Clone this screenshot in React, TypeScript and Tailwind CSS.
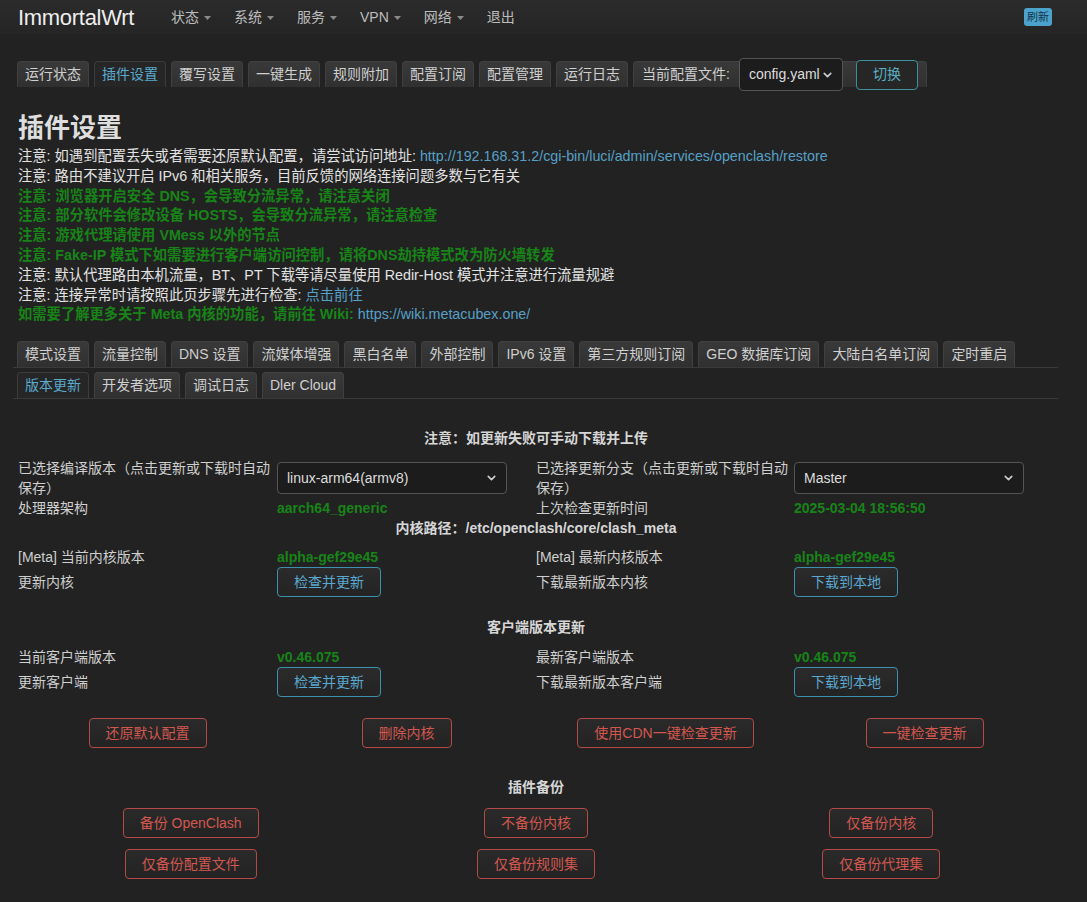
import { ChevronDown } from "lucide-react";

const FONT = "font-['Liberation_Sans','Noto_Sans_CJK_SC',sans-serif]";

const navItems = [
  { label: "状态", caret: true },
  { label: "系统", caret: true },
  { label: "服务", caret: true },
  { label: "VPN", caret: true },
  { label: "网络", caret: true },
  { label: "退出", caret: false },
];

const topTabs = ["运行状态", "插件设置", "覆写设置", "一键生成", "规则附加", "配置订阅", "配置管理", "运行日志"];

const subTabsRow1 = [
  "模式设置",
  "流量控制",
  "DNS 设置",
  "流媒体增强",
  "黑白名单",
  "外部控制",
  "IPv6 设置",
  "第三方规则订阅",
  "GEO 数据库订阅",
  "大陆白名单订阅",
  "定时重启",
];

const subTabsRow2 = ["版本更新", "开发者选项", "调试日志", "Dler Cloud"];

const Caret = () => (
  <svg width="7" height="4" viewBox="0 0 7 4" className="ml-[5px] mt-[1px]">
    <path d="M0 0 L7 0 L3.5 4 Z" fill="#8a8a8a" />
  </svg>
);

const Tab = ({ label, active }: { label: string; active?: boolean }) => (
  <div
    className={
      active
        ? "h-[26px] px-[7px] flex items-center rounded-t-[4px] border border-b-0 border-[#3c3c3c] bg-[#262626] text-[14px] text-[#5aa9cf]"
        : "h-[26px] px-[7px] flex items-center rounded-t-[4px] border border-b-0 border-[#404040] bg-linear-to-b from-[#393939] to-[#303030] text-[14px] text-[#cfcfcf]"
    }
  >
    {label}
  </div>
);

const FakeSelect = ({ value, className }: { value: string; className: string }) => (
  <div className={`relative flex items-center rounded-[4px] border border-[#555] bg-[#1c1c1c] text-[14px] text-[#ddd] ${className}`}>
    <span>{value}</span>
    <ChevronDown className="absolute right-[8px] top-1/2 -translate-y-1/2 w-[13px] h-[13px] text-[#ccc]" strokeWidth={3} />
  </div>
);

const BlueButton = ({ label }: { label: string }) => (
  <button className="h-[30px] px-[16px] rounded-[4px] border border-[#3f8fae] bg-linear-to-b from-[#2b2b2b] to-[#232323] text-[14px] text-[#5aa8d0]">
    {label}
  </button>
);

const RedButton = ({ label }: { label: string }) => (
  <button className="h-[30px] px-[16px] rounded-[4px] border border-[#b34a46] bg-linear-to-b from-[#2a2a2a] to-[#232323] text-[14px] text-[#d3574f]">
    {label}
  </button>
);

const Heading = ({ children, className = "" }: { children: React.ReactNode; className?: string }) => (
  <div className={`text-center font-bold text-[14px] leading-[20px] text-[#d6d6d6] ${className}`}>{children}</div>
);

const Label = ({ children }: { children: React.ReactNode }) => (
  <div className="text-[14px] leading-[20px] text-[#cfcfcf]">{children}</div>
);

const Green = ({ children }: { children: React.ReactNode }) => (
  <div className="text-[14px] leading-[20px] font-bold text-[#188418]">{children}</div>
);

const Notes = () => (
  <div className="mt-[1px] text-[14.3px] leading-[19.8px] text-[#e2e2e2]">
    <p>
      注意: 如遇到配置丢失或者需要还原默认配置，请尝试访问地址:{" "}
      <span className="text-[#56a0c8]">http://192.168.31.2/cgi-bin/luci/admin/services/openclash/restore</span>
    </p>
    <p>注意: 路由不建议开启 IPv6 和相关服务，目前反馈的网络连接问题多数与它有关</p>
    <p className="font-bold text-[#188418]">注意: 浏览器开启安全 DNS，会导致分流异常，请注意关闭</p>
    <p className="font-bold text-[#188418]">注意: 部分软件会修改设备 HOSTS，会导致分流异常，请注意检查</p>
    <p className="font-bold text-[#188418]">注意: 游戏代理请使用 VMess 以外的节点</p>
    <p className="font-bold text-[#188418]">注意: Fake-IP 模式下如需要进行客户端访问控制，请将DNS劫持模式改为防火墙转发</p>
    <p>注意: 默认代理路由本机流量，BT、PT 下载等请尽量使用 Redir-Host 模式并注意进行流量规避</p>
    <p>
      注意: 连接异常时请按照此页步骤先进行检查: <span className="text-[#56a0c8]">点击前往</span>
    </p>
    <p>
      <span className="font-bold text-[#188418]">如需要了解更多关于 Meta 内核的功能，请前往 Wiki: </span>
      <span className="text-[#56a0c8]">https://wiki.metacubex.one/</span>
    </p>
  </div>
);

const VersionPanel = () => (
  <div>
    <Heading className="mt-[29px]">注意：如更新失败可手动下载并上传</Heading>

    <div className="grid grid-cols-[259px_259px_258px_260px] mt-[10px]">
      <div className="h-[40px] flex items-center">
        <Label>已选择编译版本（点击更新或下载时自动保存）</Label>
      </div>
      <div className="h-[40px] flex items-center">
        <FakeSelect value="linux-arm64(armv8)" className="w-[230px] h-[32px] pl-[9px]" />
      </div>
      <div className="h-[40px] flex items-center">
        <Label>已选择更新分支（点击更新或下载时自动保存）</Label>
      </div>
      <div className="h-[40px] flex items-center">
        <FakeSelect value="Master" className="w-[230px] h-[32px] pl-[9px]" />
      </div>

      <Label>处理器架构</Label>
      <Green>aarch64_generic</Green>
      <Label>上次检查更新时间</Label>
      <Green>2025-03-04 18:56:50</Green>
    </div>

    <Heading>内核路径：/etc/openclash/core/clash_meta</Heading>

    <div className="grid grid-cols-[259px_259px_258px_260px] mt-[9px]">
      <Label>[Meta] 当前内核版本</Label>
      <Green>alpha-gef29e45</Green>
      <Label>[Meta] 最新内核版本</Label>
      <Green>alpha-gef29e45</Green>

      <div className="h-[30px] flex items-center">
        <Label>更新内核</Label>
      </div>
      <div className="h-[30px] flex items-center">
        <BlueButton label="检查并更新" />
      </div>
      <div className="h-[30px] flex items-center">
        <Label>下载最新版本内核</Label>
      </div>
      <div className="h-[30px] flex items-center">
        <BlueButton label="下载到本地" />
      </div>
    </div>

    <Heading className="mt-[20px]">客户端版本更新</Heading>

    <div className="grid grid-cols-[259px_259px_258px_260px] mt-[10px]">
      <Label>当前客户端版本</Label>
      <Green>v0.46.075</Green>
      <Label>最新客户端版本</Label>
      <Green>v0.46.075</Green>

      <div className="h-[30px] flex items-center">
        <Label>更新客户端</Label>
      </div>
      <div className="h-[30px] flex items-center">
        <BlueButton label="检查并更新" />
      </div>
      <div className="h-[30px] flex items-center">
        <Label>下载最新版本客户端</Label>
      </div>
      <div className="h-[30px] flex items-center">
        <BlueButton label="下载到本地" />
      </div>
    </div>

    <div className="grid grid-cols-4 justify-items-center mt-[21px]">
      <RedButton label="还原默认配置" />
      <RedButton label="删除内核" />
      <RedButton label="使用CDN一键检查更新" />
      <RedButton label="一键检查更新" />
    </div>

    <Heading className="mt-[29px]">插件备份</Heading>

    <div className="grid grid-cols-3 justify-items-center gap-y-[11px] mt-[11px] pb-[24px]">
      <RedButton label="备份 OpenClash" />
      <RedButton label="不备份内核" />
      <RedButton label="仅备份内核" />
      <RedButton label="仅备份配置文件" />
      <RedButton label="仅备份规则集" />
      <RedButton label="仅备份代理集" />
    </div>
  </div>
);

export default function App() {
  return (
    <div className={`min-h-[902px] bg-[#222] ${FONT}`}>
      <header className="h-[34px] flex items-center pl-[18px] pr-[35px] bg-linear-to-b from-[#2b2b2b] to-[#252525]">
        <span className="w-[153px] text-[22px] text-[#eee] tracking-[-0.3px]">ImmortalWrt</span>
        <nav className="flex items-center gap-[23px] text-[14px] text-[#bdbdbd]">
          {navItems.map((item) => (
            <span key={item.label} className="flex items-center">
              {item.label}
              {item.caret && <Caret />}
            </span>
          ))}
        </nav>
        <span className="ml-auto h-[18px] px-[3px] flex items-center rounded-[3px] bg-[#4ba3cb] text-[11px] text-[#13334a]">
          刷新
        </span>
      </header>

      <main className="w-[1072px] pl-[18px] pr-[18px]">
        {/* top tabs */}
        <div className="flex items-center gap-[5px] mt-[27px] -ml-[1px]">
          {topTabs.map((t) => (
            <Tab key={t} label={t} active={t === "插件设置"} />
          ))}
          <div className="h-[26px] px-[8px] flex items-center rounded-t-[4px] border border-b-0 border-[#404040] bg-linear-to-b from-[#393939] to-[#303030] text-[14px] text-[#cfcfcf]">
            <span className="mr-[9px]">当前配置文件:</span>
            <FakeSelect value="config.yaml" className="w-[104px] h-[33px] pl-[9px]" />
            <button className="ml-[13px] h-[30px] px-[16px] rounded-[4px] border border-[#3d8f9c] bg-[#262626] text-[14px] text-[#5aaec2]">
              切换
            </button>
          </div>
        </div>

        <h1 className="mt-[23px] text-[26px] leading-[36px] font-bold text-[#dedede]">插件设置</h1>

        <Notes />

        {/* sub tabs */}
        <div className="mt-[16px] -ml-[5px] w-[1045px]">
          <div className="flex gap-[5px] pl-[4px] border-b border-[#3a3a3a]">
            {subTabsRow1.map((t) => (
              <Tab key={t} label={t} />
            ))}
          </div>
          <div className="flex gap-[5px] pl-[4px] mt-[4px] border-b border-[#3a3a3a]">
            {subTabsRow2.map((t) => (
              <Tab key={t} label={t} active={t === "版本更新"} />
            ))}
          </div>
        </div>

        <VersionPanel />
      </main>
    </div>
  );
}
